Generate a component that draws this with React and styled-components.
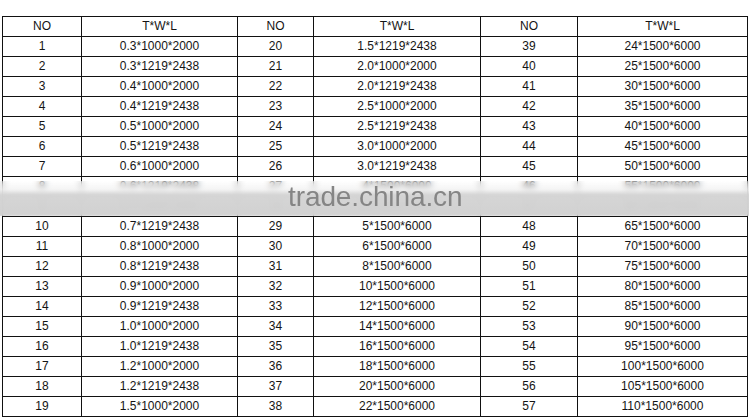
import React from "react"
import styled, { createGlobalStyle } from "styled-components"

const GlobalStyle = createGlobalStyle`
  html, body {
    margin: 0;
    padding: 0;
    background: #ffffff;
  }
  body {
    font-family: "Liberation Sans", Arial, sans-serif;
  }
`

const COLS = [79, 156, 76, 167, 97, 170]

const rows = [
  [1, "0.3*1000*2000", 20, "1.5*1219*2438", 39, "24*1500*6000"],
  [2, "0.3*1219*2438", 21, "2.0*1000*2000", 40, "25*1500*6000"],
  [3, "0.4*1000*2000", 22, "2.0*1219*2438", 41, "30*1500*6000"],
  [4, "0.4*1219*2438", 23, "2.5*1000*2000", 42, "35*1500*6000"],
  [5, "0.5*1000*2000", 24, "2.5*1219*2438", 43, "40*1500*6000"],
  [6, "0.5*1219*2438", 25, "3.0*1000*2000", 44, "45*1500*6000"],
  [7, "0.6*1000*2000", 26, "3.0*1219*2438", 45, "50*1500*6000"],
  [8, "0.6*1219*2438", 27, "4*1500*6000", 46, "55*1500*6000"],
  [9, "0.7*1000*2000", 28, "4.5*1500*6000", 47, "60*1500*6000"],
  [10, "0.7*1219*2438", 29, "5*1500*6000", 48, "65*1500*6000"],
  [11, "0.8*1000*2000", 30, "6*1500*6000", 49, "70*1500*6000"],
  [12, "0.8*1219*2438", 31, "8*1500*6000", 50, "75*1500*6000"],
  [13, "0.9*1000*2000", 32, "10*1500*6000", 51, "80*1500*6000"],
  [14, "0.9*1219*2438", 33, "12*1500*6000", 52, "85*1500*6000"],
  [15, "1.0*1000*2000", 34, "14*1500*6000", 53, "90*1500*6000"],
  [16, "1.0*1219*2438", 35, "16*1500*6000", 54, "95*1500*6000"],
  [17, "1.2*1000*2000", 36, "18*1500*6000", 55, "100*1500*6000"],
  [18, "1.2*1219*2438", 37, "20*1500*6000", 56, "105*1500*6000"],
  [19, "1.5*1000*2000", 38, "22*1500*6000", 57, "110*1500*6000"],
]

const headers = ["NO", "T*W*L", "NO", "T*W*L", "NO", "T*W*L"]

const App = () => {
  return (
    <>
      <GlobalStyle />
      <Page>
        <SheetWrap>
          <Sheet>
            <colgroup>
              {COLS.map((w, i) => (
                <col key={i} width={w} />
              ))}
            </colgroup>
            <thead>
              <Row>
                {headers.map((h, i) => (
                  <Cell as="th" key={i}>{h}</Cell>
                ))}
              </Row>
            </thead>
            <tbody>
              {rows.map((r) => (
                <Row key={r[0]}>
                  {r.map((v, i) => (
                    <Cell key={i}>{v}</Cell>
                  ))}
                </Row>
              ))}
            </tbody>
          </Sheet>
          <Watermark>
            <WatermarkText>trade.china.cn</WatermarkText>
          </Watermark>
        </SheetWrap>
      </Page>
    </>
  )
}

export default App

const Page = styled.div`
    width: 749px;
    height: 418px;
    overflow: hidden;
    padding: 16px 0 0 2px;
    box-sizing: border-box;
`
const SheetWrap = styled.div`
    position: relative;
    width: 746px;
`
const Sheet = styled.table`
    width: 746px;
    table-layout: fixed;
    border-collapse: collapse;
    font-size: 12px;
    color: #141414;
`
const Row = styled.tr`
    height: 20px;
`
const Cell = styled.td`
    border: 1px solid #111;
    padding: 0;
    height: 19px;
    text-align: center;
    vertical-align: middle;
    font-weight: normal;
    white-space: nowrap;
    line-height: 19px;
`
const Watermark = styled.div`
    position: absolute;
    left: -2px;
    right: -2px;
    top: 165px;
    height: 35px;
    backdrop-filter: blur(3px);
    background: linear-gradient(
        to bottom,
        rgba(255, 255, 255, 0.15) 0%,
        rgba(240, 240, 240, 0.75) 25%,
        rgba(212, 212, 212, 0.97) 40%,
        rgba(208, 208, 208, 0.97) 95%,
        rgba(210, 210, 210, 0.6) 100%
    );
    display: flex;
    align-items: flex-end;
    padding-left: 288px;
    box-sizing: border-box;
`
const WatermarkText = styled.span`
    font-family: "Liberation Sans", Arial, sans-serif;
    font-size: 28px;
    color: #858585;
    line-height: 1;
    margin-bottom: 5px;
    letter-spacing: -0.1px;
`
